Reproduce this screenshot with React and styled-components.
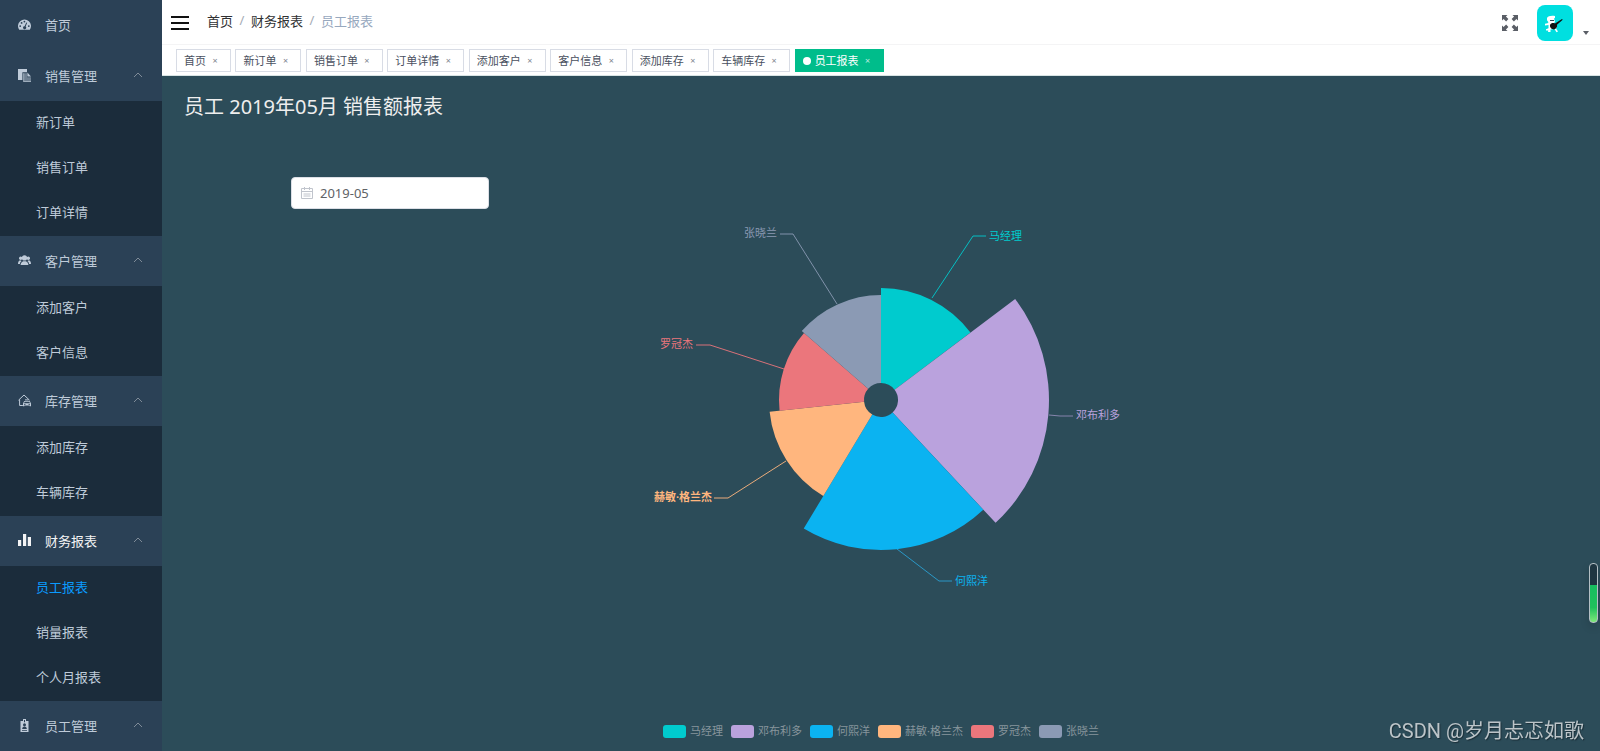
import { useState } from "react";
import styled, { createGlobalStyle } from "styled-components";

const staff = [
  { name: "马经理", color: "#00cbce", from: 0, to: 53, r: 112, line: "51,-102 92,-164 105,-164", x: 108, y: -160 },
  { name: "邓布利多", color: "#baa2dd", from: 53, to: 137, r: 168, line: "168,15 179,16 192,16", lineColor: "#8f8bb5", x: 195, y: 19 },
  { name: "何熙洋", color: "#0bb3f1", from: 137, to: 211, r: 150, line: "16,149 58,181 71,181", lineColor: "#2aa0d2", x: 74, y: 185 },
  { name: "赫敏·格兰杰", color: "#ffb67e", from: 211, to: 264, r: 112, line: "-95,61 -153,98 -167,98", x: -169, y: 101, strong: true },
  { name: "罗冠杰", color: "#eb767c", from: 264, to: 311, r: 102, line: "-97,-31 -171,-55 -185,-55", x: -188, y: -52 },
  { name: "张晓兰", color: "#8b9ab4", from: 311, to: 360, r: 105, line: "-44,-96 -88,-166 -101,-166", x: -104, y: -163 },
];

const menu = [
  { title: "销售管理", icon: "docs", items: ["新订单", "销售订单", "订单详情"] },
  { title: "客户管理", icon: "people", items: ["添加客户", "客户信息"] },
  { title: "库存管理", icon: "garage", items: ["添加库存", "车辆库存"] },
  { title: "财务报表", icon: "chart", items: ["员工报表", "销量报表", "个人月报表"] },
  { title: "员工管理", icon: "badge", items: [] },
];

const tags = [
  "首页",
  "新订单",
  "销售订单",
  "订单详情",
  "添加客户",
  "客户信息",
  "添加库存",
  "车辆库存",
  "员工报表",
];

const current = "员工报表";

const point = (angle, r) => {
  const a = (angle * Math.PI) / 180;
  return `${(Math.sin(a) * r).toFixed(2)} ${(-Math.cos(a) * r).toFixed(2)}`;
};

const slicePath = ({ from, to, r }) =>
  `M${point(from, 17)} L${point(from, r)} A${r} ${r} 0 0 1 ${point(to, r)} L${point(to, 17)} A17 17 0 0 0 ${point(from, 17)}Z`;

const icons = {
  dashboard: (
    <path
      fillRule="evenodd"
      d="M1.2 11.800A6.500 6.500 0 1 1 11.800 11.800zM2.200 7.200a.9.9 0 1 0 0 1.800.9.9 0 0 0 0-1.800zM3.600 4a.9.9 0 1 0 0 1.800.9.9 0 0 0 0-1.800zM6.400 2.700a.9.9 0 1 0 0 1.800.9.9 0 0 0 0-1.800zM10.800 7.200a.9.9 0 1 0 0 1.800.9.9 0 0 0 0-1.800zM8.300 4.400L6.600 8.200a1.500 1.500 0 1 0 1 .4l1.600-3.800z"
    />
  ),
  docs: (
    <>
      <path d="M0 0h9v3.200H4.400V11H0z" />
      <path d="M5.200 4.200H9v4h4V13H5.200z" opacity=".45" />
      <path d="M9.400 3.600L13 7.400H9.400z" />
      <path d="M5.200 4.200h1V12H13v1H5.200z" opacity=".6" />
    </>
  ),
  people: (
    <>
      <circle cx="6.5" cy="3.900" r="2.600" />
      <path d="M2.600 11c0-2.200 1.500-3.200 2.600-3.700h2.600c1.100.5 2.600 1.500 2.600 3.700z" />
      <circle cx="2.700" cy="4.200" r="1.700" />
      <circle cx="10.300" cy="4.200" r="1.700" />
      <path d="M0 10c0-2 .8-3.200 2-3.700l1.600.6C2.500 7.700 2 8.700 1.900 10zM13 10c0-2-.8-3.200-2-3.700l-1.600.6c1.100.8 1.600 1.800 1.700 3.100z" />
    </>
  ),
  garage: (
    <>
      <path
        d="M.5 6.200L6 1l5.500 5.200M1.600 5.600v5.900h3.300M7 5.900h3.600"
        fill="none"
        stroke="currentColor"
      />
      <path
        fillRule="evenodd"
        d="M6.200 7h5.600l1.200 2.400v2.900h-1.300v-.8H6.300v.8H5V9.400zM6.700 7.800L6 9.200h6l-.7-1.400zM6 10v.8h1.500V10zM10.500 10v.8H12V10z"
      />
    </>
  ),
  chart: <path d="M0 6h3.200v6H0zM5 0h3.200v12H5zM9.800 3H13v9H9.800z" />,
  badge: (
    <path
      fillRule="evenodd"
      d="M2.500 2H5V0h3v2h2.500v11h-8zM6 1v2.200h1V1zM6.500 4.200a1.500 1.500 0 1 0 0 3 1.500 1.500 0 0 0 0-3zM4.200 10h4.600c0-1.500-.8-2.400-2.300-2.400S4.200 8.500 4.200 10zM4 11v.8h5V11z"
    />
  ),
};

const Icon = ({ name }) => (
  <MenuIcon viewBox="0 0 13 13" aria-hidden="true">
    {icons[name]}
  </MenuIcon>
);

const Sidebar = () => {
  const [closed, setClosed] = useState({});

  return (
    <Side>
      <HomeLink href="#home">
        <Icon name="dashboard" />
        首页
      </HomeLink>
      {menu.map((group) => (
        <div key={group.title}>
          <GroupButton
            type="button"
            $active={group.items.includes(current)}
            aria-expanded={!closed[group.title]}
            onClick={() =>
              setClosed({ ...closed, [group.title]: !closed[group.title] })
            }
          >
            <Icon name={group.icon} />
            {group.title}
            <Chevron viewBox="0 0 10 6" $closed={closed[group.title]}>
              <path d="M1 5l4-4 4 4" />
            </Chevron>
          </GroupButton>
          {!closed[group.title] && (
            <SubMenu>
              {group.items.map((item) => (
                <li key={item}>
                  <SubLink href={`#${item}`} $active={item === current}>
                    {item}
                  </SubLink>
                </li>
              ))}
            </SubMenu>
          )}
        </div>
      ))}
    </Side>
  );
};

const Header = () => (
  <Navbar>
    <IconButton type="button" aria-label="菜单">
      <svg width="18" height="14" viewBox="0 0 18 14">
        <path d="M0 1h18M0 7h18M0 13h18" stroke="#111" strokeWidth="2" />
      </svg>
    </IconButton>
    <Breadcrumb>
      <a href="#home">首页</a>
      <Separator>/</Separator>
      <a href="#finance">财务报表</a>
      <Separator>/</Separator>
      <span>{current}</span>
    </Breadcrumb>
    <RightMenu>
      <IconButton type="button" aria-label="全屏">
        <svg width="16" height="16" viewBox="0 0 16 16" fill="#5a5e66">
          {[0, 90, 180, 270].map((turn) => (
            <path
              key={turn}
              transform={`rotate(${turn} 8 8)`}
              d="M0 0h5.500L3.900 1.600 6.400 4.100 4.100 6.400 1.600 3.900 0 5.500z"
            />
          ))}
        </svg>
      </IconButton>
      <UserButton type="button" aria-label="用户">
        <Avatar viewBox="0 0 36 36">
          <rect width="36" height="36" rx="8" fill="#00dfe0" />
          <path
            fill="#fff"
            d="M10 13c1-2 4-2.500 8-2v2l-1 .5 1 3-1 2 3 4-1 1 2 3-1.500.8-2-3.300-4 .5v2.500h-2.500l.3-1.500H9v-1.300l2.500-1V20L8 20.500v-1.800l2.500-.4 1-1-1.500-2z"
          />
          <path d="M13 15.500h4" stroke="#345" />
          <path
            d="M13 20c1-2 3-2.300 5-1.500l7-4.500.7.8-5.700 5c.5 2-.5 4-2.500 4.500S12.500 23 13 20z"
            fill="#111"
          />
        </Avatar>
        <Caret viewBox="0 0 6 4">
          <path d="M0 0h6L3 4z" />
        </Caret>
      </UserButton>
    </RightMenu>
  </Navbar>
);

// the spaces between the inline tags make the gap
const TagsView = () => (
  <TagBar>
    {tags.map((tag) => [
      <Tag key={tag} $active={tag === current}>
        <a href={`#${tag}`}>{tag}</a>
        <Close type="button" aria-label={`关闭 ${tag}`}>
          ×
        </Close>
      </Tag>,
      " ",
    ])}
  </TagBar>
);

const RoseChart = ({ data }) => (
  <Chart viewBox="-300 -191 600 420" role="img" aria-label="销售额报表">
    {data.map((item) => (
      <g key={item.name}>
        <polyline
          points={item.line}
          fill="none"
          stroke={item.lineColor || item.color}
          strokeOpacity=".9"
        />
        <path d={slicePath(item)} fill={item.color} />
        <ChartLabel
          x={item.x}
          y={item.y}
          fill={item.color}
          $end={item.x < 0}
          $strong={item.strong}
        >
          {item.name}
        </ChartLabel>
      </g>
    ))}
  </Chart>
);

const App = () => {
  const [month, setMonth] = useState("2019-05");

  return (
    <Layout>
      <GlobalStyle />
      <Sidebar />
      <Main>
        <Header />
        <TagsView />
        <Report>
          <Title>员工 2019年05月 销售额报表</Title>
          <DatePicker>
            <svg width="12" height="12" viewBox="0 0 12 12">
              <path
                d="M.5 1.500h11v10H.5zM.5 4.500h11M3.500 0v3M8.500 0v3M2.500 7h7M2.500 9h7"
                fill="none"
                stroke="#c0c4cc"
              />
            </svg>
            <input
              type="text"
              aria-label="选择月份"
              value={month}
              onChange={(e) => setMonth(e.target.value)}
            />
          </DatePicker>
          <RoseChart data={staff} />
          <Legend>
            {staff.map((item) => (
              <LegendItem key={item.name} type="button">
                <Swatch $color={item.color} />
                {item.name}
              </LegendItem>
            ))}
          </Legend>
        </Report>
      </Main>
      <Battery />
      <Watermark>CSDN @岁月忐忑如歌</Watermark>
    </Layout>
  );
};

export default App;

const GlobalStyle = createGlobalStyle`
  * {
    box-sizing: border-box;
  }
  body {
    margin: 0;
    font-family: "Noto Sans", "Noto Sans CJK SC", sans-serif;
    font-size: 13px;
    color: #303133;
  }
  a {
    color: inherit;
    text-decoration: none;
  }
  button {
    padding: 0;
    border: 0;
    background: none;
    font: inherit;
    color: inherit;
    cursor: pointer;
  }
`;

const Layout = styled.div`
  display: flex;
  height: 100vh;
  overflow: hidden;
`;

const Side = styled.nav`
  flex: none;
  width: 162px;
  padding-top: 1px;
  overflow: hidden;
  background: #2b4156;
  color: #bfcbd9;
`;

const HomeLink = styled.a`
  display: flex;
  align-items: center;
  gap: 14px;
  height: 50px;
  padding: 0 19px 4px 18px;
`;

const GroupButton = styled.button`
  display: flex;
  align-items: center;
  gap: 14px;
  width: 100%;
  height: 50px;
  padding: 0 19px 2px 18px;
  color: ${(props) => (props.$active ? "#f4f4f5" : "#bfcbd9")};
`;

const MenuIcon = styled.svg`
  width: 13px;
  height: 13px;
  fill: currentColor;
`;

const Chevron = styled.svg`
  width: 10px;
  height: 6px;
  margin-left: auto;
  fill: none;
  stroke: #7f8b98;
  transform: ${(props) => (props.$closed ? "rotate(180deg)" : "none")};
`;

const SubMenu = styled.ul`
  margin: 0;
  padding: 0;
  list-style: none;
  background: #1b2c3b;
`;

const SubLink = styled.a`
  display: block;
  height: 45px;
  padding-left: 36px;
  line-height: 42px;
  color: ${(props) => (props.$active ? "#0a9bff" : "#bfcbd9")};
`;

const Main = styled.main`
  display: flex;
  flex: 1;
  flex-direction: column;
  min-width: 0;
`;

const Navbar = styled.header`
  display: flex;
  align-items: center;
  height: 45px;
  padding: 1px 11px 0 9px;
  border-bottom: 1px solid #f4f4f5;
  background: #fff;
`;

const IconButton = styled.button`
  display: flex;
`;

const Breadcrumb = styled.div`
  display: flex;
  margin-left: 18px;
  padding-bottom: 4px;
  span:last-child {
    color: #97a8be;
  }
`;

const Separator = styled.span`
  width: 18px;
  text-align: center;
  color: #a5abb5;
`;

const RightMenu = styled.div`
  display: flex;
  align-items: center;
  gap: 19px;
  margin-left: auto;
`;

const UserButton = styled.button`
  display: flex;
  align-items: flex-end;
  gap: 10px;
`;

const Avatar = styled.svg`
  width: 36px;
  height: 36px;
`;

const Caret = styled.svg`
  width: 6px;
  height: 4px;
  margin-bottom: 6px;
  fill: #5a5e66;
`;

const TagBar = styled.div`
  height: 31px;
  padding: 4px 14px;
  border-bottom: 1px solid #d8e4e4;
  background: #fff;
  font-family: "Liberation Sans", sans-serif;
  font-size: 16px;
  line-height: 23px;
  white-space: nowrap;
`;

const Tag = styled.span`
  display: inline-flex;
  align-items: center;
  height: 23px;
  padding: 0 12px 0 7px;
  border: 1px solid ${(props) => (props.$active ? "#00bd8b" : "#d8dce5")};
  background: ${(props) => (props.$active ? "#00bd8b" : "#fff")};
  color: ${(props) => (props.$active ? "#fff" : "#495060")};
  font-family: "Noto Sans", "Noto Sans CJK SC", sans-serif;
  font-size: 11px;
  line-height: 20px;
  vertical-align: top;
  &::before {
    content: "";
    display: ${(props) => (props.$active ? "block" : "none")};
    width: 8px;
    height: 8px;
    margin-right: 4px;
    border-radius: 50%;
    background: #fff;
  }
`;

const Close = styled.button`
  width: 6px;
  margin-left: 6px;
  font-size: 9px;
  opacity: 0.7;
`;

const Report = styled.section`
  display: flex;
  flex: 1;
  flex-direction: column;
  padding: 17px 0 12px;
  background: #2c4c59;
`;

const Title = styled.h1`
  margin: 0 0 56px 22px;
  font-size: 20px;
  font-weight: 400;
  line-height: 28px;
  color: #eee;
`;

const DatePicker = styled.label`
  display: flex;
  align-items: center;
  gap: 7px;
  width: 198px;
  height: 32px;
  margin-left: 129px;
  padding: 0 10px 0 9px;
  border: 1px solid #dcdfe6;
  border-radius: 4px;
  background: #fff;
  input {
    flex: 1;
    min-width: 0;
    padding: 0;
    border: 0;
    outline: 0;
    font: inherit;
    color: #606266;
  }
`;

const Chart = styled.svg`
  align-self: center;
  width: 600px;
  height: 420px;
`;

const ChartLabel = styled.text`
  font-size: 11px;
  font-weight: ${(props) => (props.$strong ? 700 : 400)};
  text-anchor: ${(props) => (props.$end ? "end" : "start")};
`;

const Legend = styled.div`
  display: flex;
  justify-content: center;
  gap: 8px;
  margin-top: auto;
`;

const LegendItem = styled.button`
  display: flex;
  align-items: center;
  gap: 4px;
  font-size: 11px;
  line-height: 16px;
  color: #87959c;
`;

const Swatch = styled.span`
  width: 23px;
  height: 13px;
  border-radius: 3px;
  background: ${(props) => props.$color};
`;

const Battery = styled.div`
  position: fixed;
  right: 2px;
  bottom: 128px;
  width: 9px;
  height: 60px;
  border: 1px solid #b4bfc5;
  border-radius: 4px;
  background: linear-gradient(#1e3541 36%, #16bd5f 36%, #20c05c 75%, #7fe87a);
  box-shadow: 0 4px 8px rgba(0, 0, 0, 0.15);
`;

const Watermark = styled.div`
  position: fixed;
  right: 16px;
  bottom: 6px;
  font-family: Roboto, "Noto Sans CJK SC", sans-serif;
  font-size: 20px;
  line-height: 28px;
  color: #bcc4c8;
  text-shadow: 1px 1px 1px #1b2f38;
`;
